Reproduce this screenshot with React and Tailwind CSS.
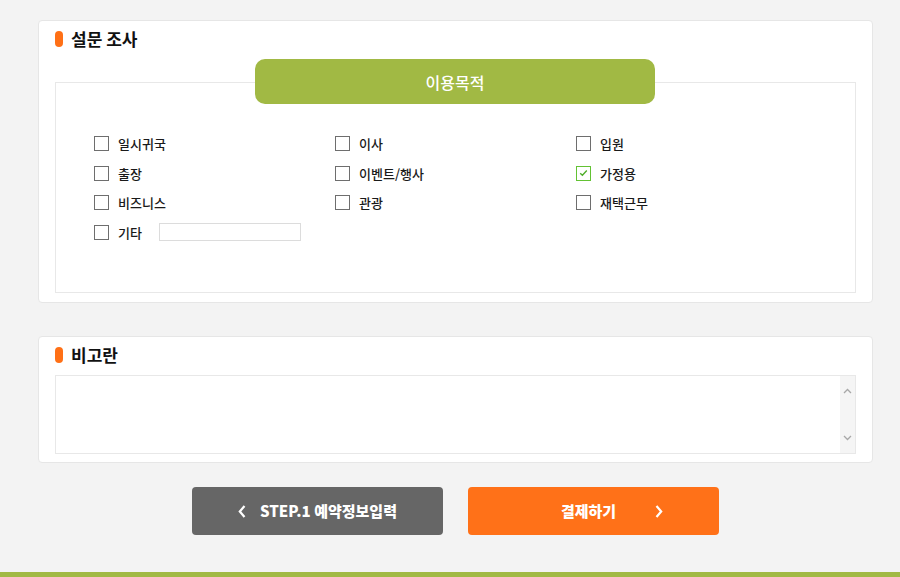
import { useState } from "react";

const font = { fontFamily: '"Noto Sans CJK KR", "Noto Sans", sans-serif' };

const options = [
  ["일시귀국", "이사", "입원"],
  ["출장", "이벤트/행사", "가정용"],
  ["비즈니스", "관광", "재택근무"],
];

const Check = ({ checked, label, onClick }) => (
  <button
    type="button"
    onClick={onClick}
    className="flex h-[29.5px] items-center gap-[9px] text-left"
  >
    <span
      className={`flex h-[15px] w-[15px] items-center justify-center border-[1.5px] bg-white ${
        checked ? "border-[#63c234]" : "border-[#6e6e6e]"
      }`}
    >
      {checked && (
        <svg width="9" height="8" viewBox="0 0 9 8" fill="none">
          <path d="M1.2 4.2 3.4 6.3 7.8 1.6" stroke="#4fae2a" strokeWidth="1.4" />
        </svg>
      )}
    </span>
    <span className="text-[13px] font-medium leading-none text-[#1a1a1a]">{label}</span>
  </button>
);

const SectionTitle = ({ children }) => (
  <div className="flex items-center gap-[8px]">
    <span className="h-[16px] w-[8px] rounded-full bg-[#ff7016]" />
    <h2 className="text-[17px] font-bold leading-[20px] text-[#111]">{children}</h2>
  </div>
);

const App = () => {
  const [selected, setSelected] = useState(["가정용"]);

  const toggle = (label) =>
    setSelected((prev) =>
      prev.includes(label) ? prev.filter((p) => p !== label) : [...prev, label]
    );

  return (
    <div className="flex h-[577px] w-[900px] flex-col bg-[#f3f3f3]" style={font}>
      <div className="ml-[38px] w-[835px] pt-[20px]">
        {/* 설문 조사 */}
        <section className="rounded-[4px] border border-[#e6e6e6] bg-white px-[16px] pb-[9px] pt-[8px]">
          <SectionTitle>설문 조사</SectionTitle>
          <div className="relative mt-[33px] h-[211px] border border-[#e8e8e8] pl-[38px] pt-[46px]">
            <div className="absolute left-[199px] top-[-24px] flex h-[45px] w-[400px] items-center justify-center rounded-[10px] bg-[#a1b944] text-[16px] font-medium text-white">
              이용목적
            </div>
            <div className="grid grid-cols-[241px_241px_241px]">
              {options.flat().map((label) => (
                <Check
                  key={label}
                  label={label}
                  checked={selected.includes(label)}
                  onClick={() => toggle(label)}
                />
              ))}
              <div className="col-span-3 flex items-center">
                <Check
                  label="기타"
                  checked={selected.includes("기타")}
                  onClick={() => toggle("기타")}
                />
                <input
                  type="text"
                  className="ml-[17px] h-[18px] w-[142px] border border-[#dcdcdc] bg-white outline-none"
                />
              </div>
            </div>
          </div>
        </section>

        {/* 비고란 */}
        <section className="mt-[33px] rounded-[4px] border border-[#e6e6e6] bg-white px-[16px] pb-[8px] pt-[8px]">
          <SectionTitle>비고란</SectionTitle>
          <div className="mt-[10px] flex h-[79px] border border-[#e8e8e8]">
            <textarea className="flex-1 resize-none bg-white outline-none" />
            <div className="flex w-[15px] flex-col items-center justify-between bg-[#f5f5f5] py-[12px]">
              <svg width="9" height="6" viewBox="0 0 9 6" fill="none">
                <path d="M1 5 4.5 1.5 8 5" stroke="#a8a8a8" strokeWidth="1.3" />
              </svg>
              <svg width="9" height="6" viewBox="0 0 9 6" fill="none">
                <path d="M1 1 4.5 4.5 8 1" stroke="#a8a8a8" strokeWidth="1.3" />
              </svg>
            </div>
          </div>
        </section>

        {/* 버튼 */}
        <div className="mt-[24px] flex justify-center gap-[25px]">
          <button
            type="button"
            className="flex h-[48px] w-[251px] items-center justify-center gap-[14px] rounded-[4px] bg-[#666666] text-[15px] font-black text-white"
          >
            <svg width="8" height="13" viewBox="0 0 8 13" fill="none">
              <path d="M6.5 1 1.8 6.5 6.5 12" stroke="#fff" strokeWidth="2.2" />
            </svg>
            <span>STEP.1 예약정보입력</span>
          </button>
          <button
            type="button"
            className="relative flex h-[48px] w-[251px] items-center justify-center rounded-[4px] bg-[#ff7118] text-[15px] font-black text-white"
          >
            <span className="ml-[-10px]">결제하기</span>
            <svg
              className="absolute right-[56px]"
              width="8"
              height="13"
              viewBox="0 0 8 13"
              fill="none"
            >
              <path d="M1.5 1 6.2 6.5 1.5 12" stroke="#fff" strokeWidth="2.2" />
            </svg>
          </button>
        </div>
      </div>
      <div className="mt-auto h-[5px] bg-[#a1b944]" />
    </div>
  );
};

export default App;
